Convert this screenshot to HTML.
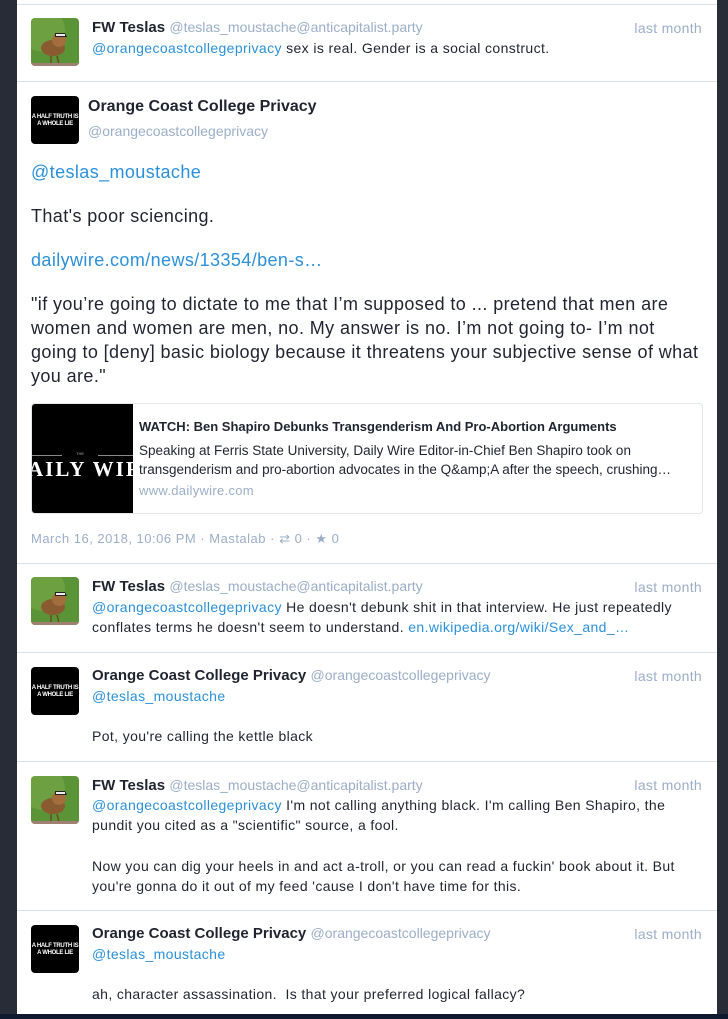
<!DOCTYPE html>
<html><head><meta charset="utf-8"><style>
*{margin:0;padding:0;box-sizing:border-box}
body{width:728px;height:1019px;background:#282c37;position:relative;overflow:hidden;font-family:"Liberation Sans",Arial,sans-serif;color:#1f2430}
.col{position:absolute;left:17px;top:0;width:700px;height:1014px;background:#fff}
.bot{position:absolute;left:0;top:1014px;width:728px;height:5px;background:#0f1a30}
.sep{position:absolute;left:17px;width:700px;height:1px;background:#d9e1e8}
.a{position:absolute;width:48px;height:48px;border-radius:4px;overflow:hidden}
.blk{background:#000;color:#fff;font-size:6px;font-weight:bold;line-height:7px;text-align:center;padding-top:18px;letter-spacing:-0.3px;white-space:nowrap}
.t{position:absolute;font-size:14px;line-height:20px;white-space:nowrap;letter-spacing:0.38px}
.n{font-weight:bold;font-size:15px;color:#1f2430;letter-spacing:0}
.h{color:#9baec8;font-weight:normal;font-size:14px;letter-spacing:0}
.l{color:#2b90d9}
.time{position:absolute;right:26px;font-size:14px;color:#9baec8;line-height:20px;letter-spacing:0.3px}
.big{position:absolute;left:31px;font-size:18px;line-height:24px;white-space:nowrap;letter-spacing:0.4px}
</style></head><body>
<div class="col"></div>
<div class="bot"></div>
<div class="sep" style="top:4px"></div>
<div class="sep" style="top:81px"></div>
<div class="sep" style="top:563px"></div>
<div class="sep" style="top:652px"></div>
<div class="sep" style="top:761px"></div>
<div class="sep" style="top:910px"></div>

<svg width="0" height="0" style="position:absolute"><defs>
<g id="b"><rect width="48" height="48" fill="#5a9436"/><circle cx="12" cy="12" r="22" fill="#7aa84a" opacity=".6"/><ellipse cx="22" cy="30" rx="12" ry="8" fill="#8a5a30"/><ellipse cx="28" cy="22" rx="7" ry="7" fill="#a46e3c"/><path d="M24 15 l10 0 l2 4 l-12 0z" fill="#222"/><path d="M25 17 l9 0" stroke="#eee" stroke-width="2"/><path d="M20 38 l0 8 M26 38 l2 8" stroke="#6b4a2a" stroke-width="1.5"/><rect y="45" width="48" height="3" fill="#a08070"/></g>
</defs></svg>

<svg class="a" style="left:31px;top:18px" viewBox="0 0 48 48"><use href="#b"/></svg>
<div class="t" style="left:92px;top:17px"><span class="n">FW Teslas</span> <span class="h">@teslas_moustache@anticapitalist.party</span></div>
<div class="time" style="top:18px">last month</div>
<div class="t" style="left:92px;top:38px"><span class="l">@orangecoastcollegeprivacy</span> sex is real. Gender is a social construct.</div>

<div class="a blk" style="left:31px;top:96px">A HALF TRUTH IS<br>A WHOLE LIE</div>
<div class="t n" style="left:88px;top:97px;font-size:16px">Orange Coast College Privacy</div>
<div class="t h" style="left:88px;top:121px">@orangecoastcollegeprivacy</div>
<div class="big l" style="top:160px">@teslas_moustache</div>
<div class="big" style="top:204px">That's poor sciencing.</div>
<div class="big l" style="top:248px">dailywire.com/news/13354/ben-s…</div>
<div class="big" style="top:292px">"if you’re going to dictate to me that I’m supposed to ... pretend that men are<br>women and women are men, no. My answer is no. I’m not going to- I’m not<br>going to [deny] basic biology because it threatens your subjective sense of what<br>you are."</div>
<div style="position:absolute;left:31px;top:403px;width:672px;height:111px;border:1px solid #e2e7ec;border-radius:4px;overflow:hidden">
 <div style="position:absolute;left:0;top:0;width:101px;height:111px;background:#000;color:#fff;overflow:hidden">
  <div style="position:absolute;left:0;top:51px;width:30px;height:1px;background:#888"></div>
  <div style="position:absolute;left:66px;top:51px;width:35px;height:1px;background:#888"></div>
  <div style="position:absolute;left:44px;top:47px;font-size:4px;color:#aaa">THE</div>
  <div style="position:absolute;left:-4px;top:53px;font-family:'Liberation Serif',serif;font-size:21px;font-weight:bold;letter-spacing:2px;white-space:nowrap">AILY WIRE</div>
 </div>
 <div class="t" style="left:107px;top:13px;font-weight:bold;font-size:13px;letter-spacing:0">WATCH: Ben Shapiro Debunks Transgenderism And Pro-Abortion Arguments</div>
 <div class="t" style="left:107px;top:37px;font-size:13.5px;line-height:19px;letter-spacing:0">Speaking at Ferris State University, Daily Wire Editor-in-Chief Ben Shapiro took on<br>transgenderism and pro-abortion advocates in the Q&amp;amp;A after the speech, crushing…</div>
 <div class="t h" style="left:107px;top:77px;font-size:13px;letter-spacing:0.3px">www.dailywire.com</div>
</div>
<div class="t h" style="left:31px;top:529px;font-size:13px;letter-spacing:0.5px">March 16, 2018, 10:06 PM · Mastalab · <span style="font-size:13px">⇄</span> 0 · ★ 0</div>

<svg class="a" style="left:31px;top:577px" viewBox="0 0 48 48"><use href="#b"/></svg>
<div class="t" style="left:92px;top:576px"><span class="n">FW Teslas</span> <span class="h">@teslas_moustache@anticapitalist.party</span></div>
<div class="time" style="top:577px">last month</div>
<div class="t" style="left:92px;top:597px"><span class="l">@orangecoastcollegeprivacy</span> He doesn't debunk shit in that interview. He just repeatedly<br>conflates terms he doesn't seem to understand. <span class="l">en.wikipedia.org/wiki/Sex_and_…</span></div>

<div class="a blk" style="left:31px;top:667px">A HALF TRUTH IS<br>A WHOLE LIE</div>
<div class="t" style="left:92px;top:665px"><span class="n">Orange Coast College Privacy</span> <span class="h">@orangecoastcollegeprivacy</span></div>
<div class="time" style="top:666px">last month</div>
<div class="t l" style="left:92px;top:686px">@teslas_moustache</div>
<div class="t" style="left:92px;top:726px">Pot, you're calling the kettle black</div>

<svg class="a" style="left:31px;top:776px" viewBox="0 0 48 48"><use href="#b"/></svg>
<div class="t" style="left:92px;top:775px"><span class="n">FW Teslas</span> <span class="h">@teslas_moustache@anticapitalist.party</span></div>
<div class="time" style="top:775px">last month</div>
<div class="t" style="left:92px;top:795px"><span class="l">@orangecoastcollegeprivacy</span> I'm not calling anything black. I'm calling Ben Shapiro, the<br>pundit you cited as a "scientific" source, a fool.</div>
<div class="t" style="left:92px;top:856px">Now you can dig your heels in and act a-troll, or you can read a fuckin' book about it. But<br>you're gonna do it out of my feed 'cause I don't have time for this.</div>

<div class="a blk" style="left:31px;top:925px">A HALF TRUTH IS<br>A WHOLE LIE</div>
<div class="t" style="left:92px;top:923px"><span class="n">Orange Coast College Privacy</span> <span class="h">@orangecoastcollegeprivacy</span></div>
<div class="time" style="top:924px">last month</div>
<div class="t l" style="left:92px;top:944px">@teslas_moustache</div>
<div class="t" style="left:92px;top:984px">ah, character assassination.&nbsp; Is that your preferred logical fallacy?</div>
</body></html>
